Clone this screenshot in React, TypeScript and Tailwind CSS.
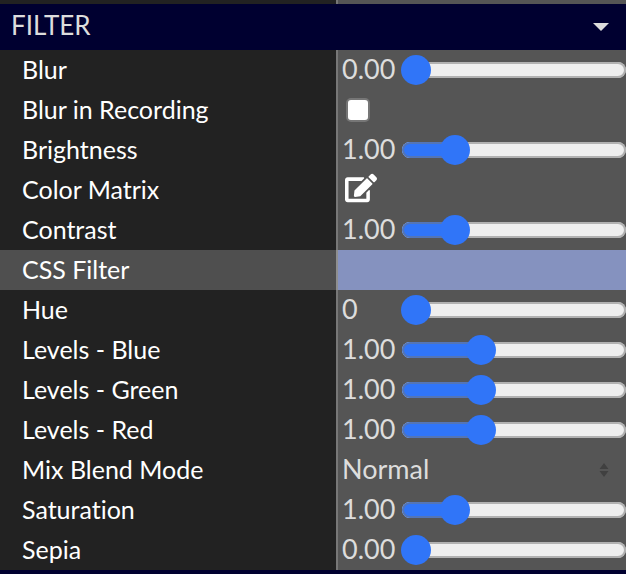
import { useState } from "react";
import type { ReactNode } from "react";
import { FaEdit } from "react-icons/fa";

const valueText = "text-[27px] leading-9 text-[#dddddd]";

function Row({ id, label, active, children }: { id: string; label: string; active?: boolean; children: ReactNode }) {
  return (
    <div className="grid h-10 grid-cols-[54%_minmax(0,1fr)]">
      <label
        htmlFor={id}
        className={`flex items-center whitespace-nowrap border-r-2 pb-0.5 pl-[22px] text-[25px] leading-9 text-white ${
          active ? "border-[#8f8f8f] bg-[#4f4f4f]" : "border-[#777777] bg-[#222222]"
        }`}
      >
        {label}
      </label>
      <div className={`flex min-w-0 items-center ${active ? "bg-[#8592bf]" : "bg-[#555555]"}`}>{children}</div>
    </div>
  );
}

type SliderProps = { id: string; label: string; initial: number; max: number; step?: number; digits?: number };

function SliderRow({ id, label, initial, max, step = 0.01, digits = 2 }: SliderProps) {
  const [value, setValue] = useState(initial);
  const percent = (value / max) * 100;
  return (
    <Row id={id} label={label}>
      <output htmlFor={id} className={`w-[63px] shrink-0 pb-0.5 pl-1 ${valueText}`}>
        {value.toFixed(digits)}
      </output>
      <div className="grid min-w-0 flex-1 items-center">
        <span className="col-start-1 row-start-1 ml-px h-4 overflow-hidden rounded-full bg-[#efefef]">
          <span className="block h-4 bg-[#3075f8]" style={{ width: value > 0 ? `calc(${percent}% + 8px)` : 0 }} />
          <span className="-mt-4 block h-4 rounded-full border-2 border-[#767676]/50" />
        </span>
        <input
          id={id}
          type="range"
          min={0}
          max={max}
          step={step}
          value={value}
          onChange={(e) => setValue(Number(e.target.value))}
          className="z-10 col-start-1 row-start-1 m-0 h-[30px] w-full appearance-none bg-transparent [&::-webkit-slider-thumb]:size-[30px] [&::-webkit-slider-thumb]:appearance-none [&::-webkit-slider-thumb]:rounded-full [&::-webkit-slider-thumb]:bg-[#3075f8]"
        />
      </div>
    </Row>
  );
}

export default function App() {
  const [open, setOpen] = useState(true);
  const [blurRecording, setBlurRecording] = useState(false);
  const [cssFilter, setCssFilter] = useState("");
  const [blend, setBlend] = useState("Normal");

  return (
    <main className="min-h-screen w-full bg-[#000030] font-['Lato',sans-serif] [font-variant-ligatures:none]">
      <div className="grid h-1 grid-cols-[54%_minmax(0,1fr)]">
        <div className="border-r-2 border-[#777777] bg-[#222222]" />
        <div className="bg-[#555555]" />
      </div>
      <button
        type="button"
        aria-expanded={open}
        onClick={() => setOpen(!open)}
        className="flex h-[46px] w-full items-center justify-between bg-[#000030] pr-[17px] pb-1 pl-[11px] text-[26px] leading-9 text-[#dddddd]"
      >
        FILTER
        <svg viewBox="0 0 16 8" className="mt-1 h-2 w-4 fill-[#dddddd]" aria-hidden="true">
          <path d="M0 0H16L8 8Z" />
        </svg>
      </button>
      {open && (
        <section>
          <SliderRow id="blur" label="Blur" initial={0} max={5} />
          <Row id="blur-recording" label="Blur in Recording">
            <input
              id="blur-recording"
              type="checkbox"
              checked={blurRecording}
              onChange={(e) => setBlurRecording(e.target.checked)}
              className="ml-2 size-6 appearance-none rounded-[5px] border-2 border-[#767676] bg-white checked:bg-[#3075f8]"
            />
          </Row>
          <SliderRow id="brightness" label="Brightness" initial={1} max={5} />
          <Row id="color-matrix" label="Color Matrix">
            <button id="color-matrix" type="button" className="ml-[7px] pb-1 text-white">
              <FaEdit className="size-8" />
            </button>
          </Row>
          <SliderRow id="contrast" label="Contrast" initial={1} max={5} />
          <Row id="css-filter" label="CSS Filter" active>
            <input
              id="css-filter"
              type="text"
              value={cssFilter}
              onChange={(e) => setCssFilter(e.target.value)}
              className="h-full w-full bg-transparent px-1 text-[25px] text-white outline-none"
            />
          </Row>
          <SliderRow id="hue" label="Hue" initial={0} max={360} step={1} digits={0} />
          <SliderRow id="levels-blue" label="Levels - Blue" initial={1} max={3} />
          <SliderRow id="levels-green" label="Levels - Green" initial={1} max={3} />
          <SliderRow id="levels-red" label="Levels - Red" initial={1} max={3} />
          <Row id="blend" label="Mix Blend Mode">
            <div className="grid w-full items-center">
              <select
                id="blend"
                value={blend}
                onChange={(e) => setBlend(e.target.value)}
                className={`col-start-1 row-start-1 w-full appearance-none bg-transparent pb-0.5 pl-1 ${valueText}`}
              >
                <option>Normal</option>
                <option>Multiply</option>
                <option>Screen</option>
                <option>Overlay</option>
              </select>
              <svg
                viewBox="0 0 10 14"
                className="pointer-events-none col-start-1 row-start-1 mr-[17px] h-[14px] w-[10px] justify-self-end fill-[#404040]"
                aria-hidden="true"
              >
                <path d="M5 0L9.5 6H.5ZM.5 8H9.5L5 14Z" />
              </svg>
            </div>
          </Row>
          <SliderRow id="saturation" label="Saturation" initial={1} max={5} />
          <SliderRow id="sepia" label="Sepia" initial={0} max={5} />
        </section>
      )}
    </main>
  );
}
